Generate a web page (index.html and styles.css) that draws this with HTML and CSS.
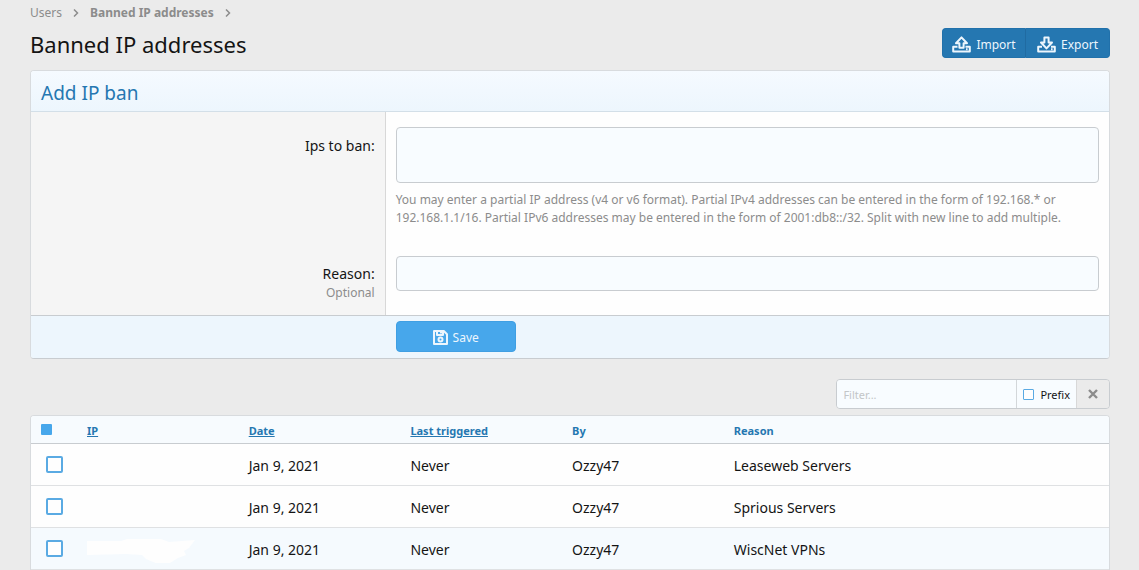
FILE: index.html
```html
<!DOCTYPE html>
<html lang="en">
<head>
<meta charset="utf-8">
<title>Banned IP addresses</title>
<link rel="stylesheet" href="styles.css">
</head>
<body>
<main class="page">
  <nav class="crumbs" aria-label="Breadcrumb">
    <a href="#">Users</a>
    <svg class="chevron" viewBox="0 0 6 8"><path d="M1 0.5 4.5 4 1 7.5"/></svg>
    <a href="#" class="current">Banned IP addresses</a>
    <svg class="chevron" viewBox="0 0 6 8"><path d="M1 0.5 4.5 4 1 7.5"/></svg>
  </nav>

  <header class="title-bar">
    <h1>Banned IP addresses</h1>
    <div class="button-group">
      <button type="button" class="button">
        <svg class="icon" viewBox="0 0 19 17"><path d="M5.5 10.8H1.2v4.6h16.6v-4.6h-4.3M9.5 1.4 4 7.3h3.4v4.5h4.2V7.3H15z"/><path d="M14 13.2h1.6"/></svg>
        Import
      </button>
      <button type="button" class="button">
        <svg class="icon" viewBox="0 0 19 17"><path d="M5 10.8H1.2v4.6h16.6v-4.6H14M9.5 12.4 4 6.5h3.4V1.4h4.2v5.1H15z"/><path d="M14 13.2h1.6"/></svg>
        Export
      </button>
    </div>
  </header>

  <form class="card">
    <h2 class="card-header">Add IP ban</h2>
    <div class="form-row">
      <div class="form-label"><label for="ips">Ips to ban:</label></div>
      <div class="form-field">
        <textarea id="ips" class="input input-tall"></textarea>
        <p class="explain">You may enter a partial IP address (v4 or v6 format). Partial IPv4 addresses can be entered in the form of 192.168.* or 192.168.1.1/16. Partial IPv6 addresses may be entered in the form of 2001:db8::/32. Split with new line to add multiple.</p>
      </div>
    </div>
    <div class="form-row">
      <div class="form-label form-label-last"><label for="reason">Reason:</label><span class="optional">Optional</span></div>
      <div class="form-field form-field-last"><input id="reason" type="text" class="input"></div>
    </div>
    <div class="form-submit">
      <button type="button" class="button button-save">
        <svg class="icon icon-save" viewBox="0 0 15 15"><path d="M1 1h9.8L14 4.2V14H1z"/><path d="M4 1v4h6V1M8 1.5v2"/><circle cx="7.5" cy="9.5" r="2"/></svg>
        Save
      </button>
    </div>
  </form>

  <div class="filter-row">
    <div class="filter">
      <input type="text" class="filter-input" placeholder="Filter..." aria-label="Filter">
      <label class="filter-prefix"><input type="checkbox" class="check check-small">Prefix</label>
      <button type="button" class="filter-clear" aria-label="Clear"><svg viewBox="0 0 10 10"><path d="M1 1l8 8M9 1l-8 8"/></svg></button>
    </div>
  </div>

  <div class="card card-list">
    <table class="data">
      <thead>
        <tr>
          <th class="col-check"><input type="checkbox" class="check check-all" aria-label="Select all"></th>
          <th><a href="#">IP</a></th>
          <th><a href="#">Date</a></th>
          <th><a href="#">Last triggered</a></th>
          <th>By</th>
          <th class="col-reason">Reason</th>
        </tr>
      </thead>
      <tbody>
        <tr>
          <td class="col-check"><input type="checkbox" class="check" aria-label="Select Leaseweb Servers"></td>
          <td></td><td>Jan 9, 2021</td><td>Never</td><td>Ozzy47</td><td>Leaseweb Servers</td>
        </tr>
        <tr>
          <td class="col-check"><input type="checkbox" class="check" aria-label="Select Sprious Servers"></td>
          <td></td><td>Jan 9, 2021</td><td>Never</td><td>Ozzy47</td><td>Sprious Servers</td>
        </tr>
        <tr class="highlight">
          <td class="col-check"><input type="checkbox" class="check" aria-label="Select WiscNet VPNs"></td>
          <td><svg class="redacted" viewBox="0 0 112 26"><path d="M0 4h34l6-2h34l8 3 26-2-6 8-5 3 2 4-8 3-8 5-12 1-12-5-4-4-16-1-39 1z"/></svg></td><td>Jan 9, 2021</td><td>Never</td><td>Ozzy47</td><td>WiscNet VPNs</td>
        </tr>
      </tbody>
    </table>
  </div>
</main>
</body>
</html>
```
FILE: styles.css
```css
* { box-sizing: border-box; }

body {
  margin: 0;
  background: #ebebeb;
  color: #141414;
  font: 14px/21px "Noto Sans", "Open Sans", sans-serif;
}

button, input, textarea { font: inherit; }

.page { padding: 3px 29px 0 30px; }

.crumbs {
  display: flex;
  align-items: center;
  gap: 11px;
  font-size: 12px;
  line-height: 20px;
}
.crumbs a { color: #8c8c8c; text-decoration: none; }
.crumbs .current { font-weight: 700; }
.chevron { width: 6px; height: 8px; fill: none; stroke: #8c8c8c; stroke-width: 1.5; }

.title-bar {
  display: flex;
  align-items: center;
  justify-content: space-between;
  padding: 5px 0 12px;
}
h1 { margin: 0; padding-top: 2px; font-size: 22px; line-height: 28px; font-weight: 400; }

.button-group { display: flex; }
.button {
  display: inline-flex;
  align-items: center;
  justify-content: center;
  gap: 5px;
  height: 30px;
  padding: 2px 10px 0;
  border: 1px solid #2171ab;
  border-radius: 4px;
  background: #2577b1;
  color: #edf6fd;
  font-size: 12px;
}
.button-group .button { width: 84px; padding: 2px 0 0; }
.button-group .button:first-child { border-radius: 4px 0 0 4px; border-right-color: #206ba2; }
.button-group .button:last-child { border-radius: 0 4px 4px 0; border-left: 0; }
.icon { flex: none; width: 19px; height: 17px; fill: none; stroke: currentColor; stroke-width: 2; stroke-linejoin: round; }

.card {
  background: #fefefe;
  border: 1px solid #d8dbde;
  border-bottom-color: #c8ccd0;
  border-radius: 4px;
  overflow: hidden;
}
.card-list { border-bottom: 0; border-radius: 4px 4px 0 0; }
.card-header {
  margin: 0;
  padding: 8px 10px 4px;
  border-bottom: 1px solid #d3dfe8;
  background: linear-gradient(#f5faff, #edf6fd);
  color: #2577b1;
  font-size: 19px;
  line-height: 28px;
  font-weight: 400;
}

.form-row { display: flex; }
.form-label {
  width: 32.9%;
  padding: 23px 10px 12px;
  border-right: 1px solid #d8d8d8;
  background: #f5f5f5;
  text-align: right;
}
.form-label-last { padding-top: 22px; }
.optional { display: block; color: #8c8c8c; font-size: 12px; line-height: 18px; }
.form-field { flex: 1; padding: 15px 10px 14px; }
.form-field-last { padding-bottom: 24px; }
.input {
  display: block;
  width: 100%;
  height: 35px;
  padding: 5px;
  border: 1px solid #c8ccd0;
  border-radius: 4px;
  background: #f8fcff;
}
.input-tall { height: 56px; resize: none; }
.explain { margin: 8px 0 0; color: #8c8c8c; font-size: 12px; line-height: 18px; }

.form-submit {
  padding: 5px 10px 6px calc(32.9% + 10px);
  border-top: 1px solid #c8ccd0;
  background: #edf6fd;
}
.button-save { display: flex; width: 120px; height: 31px; border-color: #3f9fe3; background: #47a7eb; }
.icon-save { width: 15px; height: 15px; }

.filter-row { display: flex; justify-content: flex-end; padding: 20px 0 6px; }
.filter {
  display: flex;
  height: 30px;
  border: 1px solid #c8ccd0;
  border-radius: 4px;
  overflow: hidden;
  font-size: 11px;
}
.filter-input { width: 180px; padding: 0 6px; border: 0; border-right: 1px solid #d3d7da; background: #f8fcff; }
.filter-input::placeholder { color: #c3c6c8; opacity: 1; }
.filter-prefix { display: flex; align-items: center; gap: 6px; padding: 0 6px; background: #f8fcff; }
.filter-clear { width: 33px; padding: 0; border: 0; border-left: 1px solid #d8d8d8; background: #ebebeb; }
.filter-clear svg { width: 10px; height: 10px; stroke: #8c8c8c; stroke-width: 2.4; }

.check {
  appearance: none;
  display: block;
  width: 17px;
  height: 17px;
  margin: 0;
  border: 2px solid #5aaae3;
  border-radius: 2px;
  background: #fefefe;
}
.check-small { width: 11px; height: 11px; border-width: 1px; border-radius: 1px; }
.check-all { width: 11px; height: 11px; border: 0; border-radius: 1px; background: #47a7eb; }

.data { width: 100%; border-collapse: separate; border-spacing: 0; table-layout: fixed; }
.data th, .data td { padding: 0 10px; text-align: left; }
.data th {
  width: 15%;
  height: 28px;
  padding-top: 2px;
  border-bottom: 1px solid #c8ccd0;
  background: #f7fbfe;
  color: #2577b1;
  font-size: 11px;
}
.data th a { color: inherit; }
.data td { height: 42px; padding-top: 2px; border-bottom: 1px solid #dfe1e3; }
.data .highlight td { background: #f5fafe; }
.data .col-check { width: 46px; padding-top: 0; }
.data td.col-check { padding: 0 0 0 15px; }
.data .col-reason { width: auto; }
.redacted { display: block; width: 112px; height: 26px; fill: #fefefe; }
```
